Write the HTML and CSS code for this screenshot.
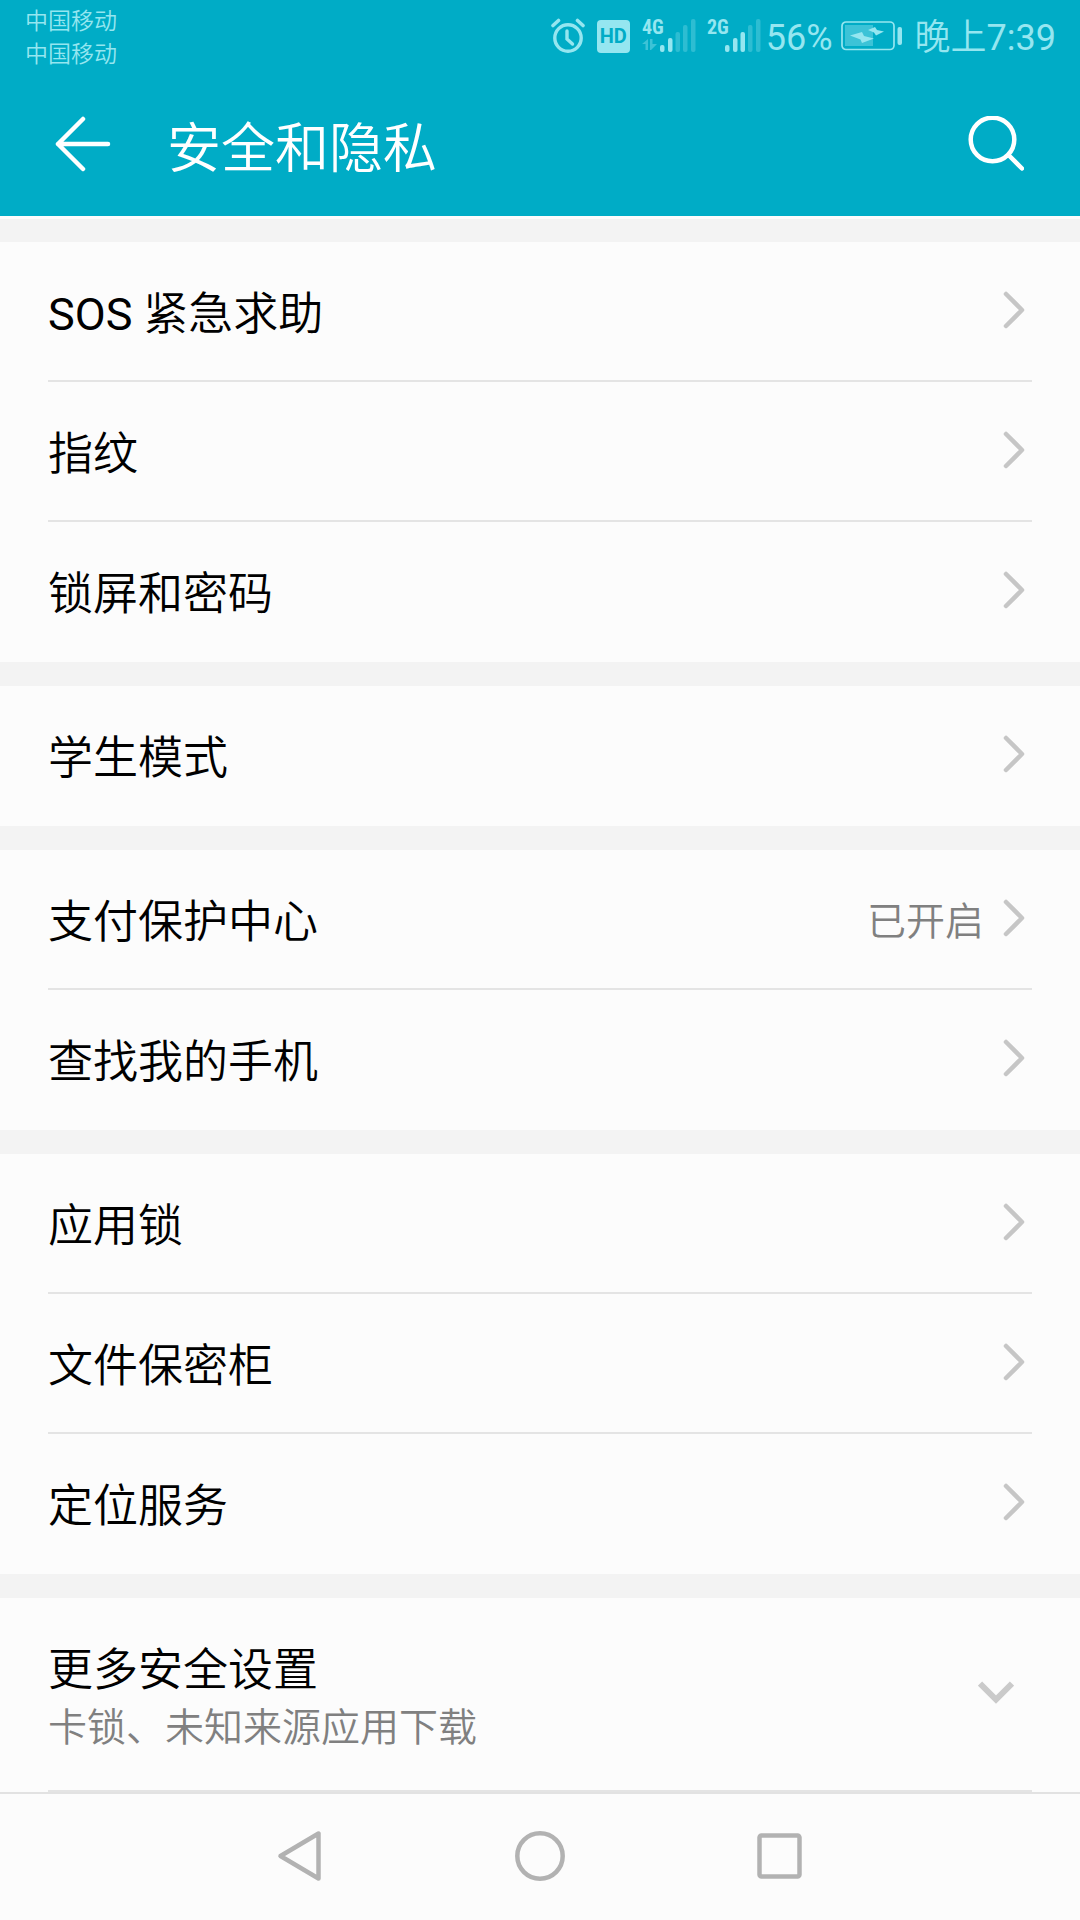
FILE: index.html
```html
<!DOCTYPE html>
<html lang="zh-CN">
<head>
<meta charset="utf-8">
<meta name="viewport" content="width=device-width, initial-scale=1">
<title>安全和隐私</title>
<link rel="stylesheet" href="styles.css">
</head>
<body>
<svg class="defs" aria-hidden="true">
  <symbol id="chevron" viewBox="0 0 24 40"><path d="M4 4 20 20 4 36" fill="none" stroke="currentColor" stroke-width="4.5" stroke-linecap="round" stroke-linejoin="round"/></symbol>
</svg>
<header class="header">
  <div class="status">
    <div class="carriers"><span>中国移动</span><span>中国移动</span></div>
    <div class="indicators">
      <svg class="alarm" width="34" height="36" viewBox="0 0 34 36" fill="none" stroke="currentColor" stroke-linecap="round"><circle cx="17" cy="20" r="13.2" stroke-width="3.4"/><path d="M2 7.500 7.500 2.500M26.500 2.500 32 7.500" stroke-width="3.6"/><path d="M16 13v8l5.500 5" stroke-width="3.400"/></svg>
      <span class="hd">HD</span>
      <svg class="signal" width="54" height="44" viewBox="0 -4 54 44" fill="currentColor"><text class="net" x="0" y="16">4G</text><g opacity=".4"><path d="M0 26 6 21v11H3.500v-6zM8 21h2.500v5H15l-6 6H8z"/></g><rect x="18" y="27" width="4.500" height="7" rx="2"/><rect x="26" y="20" width="4.500" height="14" rx="2"/><g opacity=".3"><rect x="33.500" y="14" width="4.500" height="20" rx="2"/><rect x="41" y="7" width="4.500" height="27" rx="2"/><rect x="49" y="1" width="4.500" height="33" rx="2"/></g></svg>
      <svg class="signal" width="54" height="44" viewBox="0 -4 54 44" fill="currentColor"><text class="net" x="0" y="16">2G</text><rect x="18" y="27" width="4.500" height="7" rx="2"/><rect x="26" y="20" width="4.500" height="14" rx="2"/><rect x="33.500" y="14" width="4.500" height="20" rx="2"/><g opacity=".3"><rect x="41" y="7" width="4.500" height="27" rx="2"/><rect x="49" y="1" width="4.500" height="33" rx="2"/></g></svg>
      <span class="percent">56%</span>
      <svg class="battery" width="62" height="30" viewBox="0 0 62 30"><rect x="1" y="1" width="52" height="27.500" rx="4" fill="none" stroke="currentColor" stroke-width="1.700"/><rect x="4" y="4" width="28" height="21" fill="currentColor" opacity=".4"/><rect x="56.500" y="6" width="4.500" height="18" rx="2" fill="currentColor"/><path d="M9 14.500 21 11 23 15 33 17.500 21 22 19.500 18.500zM27 9 34 6 36 9 43 10.500 35 14.500 33 11.500z" fill="currentColor"/></svg>
      <time class="clock"><span class="daypart">晚上</span>7:39</time>
    </div>
  </div>
  <div class="appbar">
    <button class="icon-button" type="button" aria-label="返回"><svg width="56" height="56" viewBox="0 0 56 56" fill="none" stroke="currentColor" stroke-width="4.500" stroke-linecap="round" stroke-linejoin="round"><path d="M53 28H3M28 3 3 28l25 25"/></svg></button>
    <h1 class="title">安全和隐私</h1>
    <button class="icon-button" type="button" aria-label="搜索"><svg width="56" height="56" viewBox="0 0 56 56" fill="none" stroke="currentColor" stroke-width="4.500" stroke-linecap="round"><circle cx="24.500" cy="23.500" r="21.800"/><path d="M40.500 39 54 52.500"/></svg></button>
  </div>
</header>
<main class="settings">
  <ul class="group">
    <li><a class="row" href="#sos"><span class="label"><span class="latin">SOS</span> 紧急求助</span><svg class="chevron"><use href="#chevron"/></svg></a></li>
    <li><a class="row" href="#fingerprint"><span class="label">指纹</span><svg class="chevron"><use href="#chevron"/></svg></a></li>
    <li><a class="row" href="#lock"><span class="label">锁屏和密码</span><svg class="chevron"><use href="#chevron"/></svg></a></li>
  </ul>
  <ul class="group">
    <li><a class="row" href="#student"><span class="label">学生模式</span><svg class="chevron"><use href="#chevron"/></svg></a></li>
  </ul>
  <ul class="group">
    <li><a class="row" href="#payment"><span class="label">支付保护中心</span><span class="value">已开启</span><svg class="chevron"><use href="#chevron"/></svg></a></li>
    <li><a class="row" href="#find"><span class="label">查找我的手机</span><svg class="chevron"><use href="#chevron"/></svg></a></li>
  </ul>
  <ul class="group">
    <li><a class="row" href="#applock"><span class="label">应用锁</span><svg class="chevron"><use href="#chevron"/></svg></a></li>
    <li><a class="row" href="#safe"><span class="label">文件保密柜</span><svg class="chevron"><use href="#chevron"/></svg></a></li>
    <li><a class="row" href="#location"><span class="label">定位服务</span><svg class="chevron"><use href="#chevron"/></svg></a></li>
  </ul>
  <div class="group">
    <button class="row more" type="button" aria-expanded="false"><span class="more-text"><span class="label">更多安全设置</span><span class="value">卡锁、未知来源应用下载</span></span><svg class="expand" width="36" height="24" viewBox="0 0 36 24" fill="none" stroke="currentColor" stroke-width="6"><path d="M2 2.500 18 18.500 34 2.500"/></svg></button>
  </div>
</main>
<nav class="navbar" aria-label="系统导航">
  <button class="nav-button" type="button" aria-label="后退"><svg width="52" height="52" viewBox="0 0 52 52"><path d="M44.500 3.500v45L6.500 26z"/></svg></button>
  <button class="nav-button" type="button" aria-label="主屏幕"><svg width="52" height="52" viewBox="0 0 52 52"><circle cx="26" cy="26" r="22.700"/></svg></button>
  <button class="nav-button" type="button" aria-label="最近任务"><svg width="52" height="52" viewBox="0 0 52 52"><rect x="5.500" y="5.500" width="40" height="41" rx="2"/></svg></button>
</nav>
</body>
</html>
```
FILE: styles.css
```css
* {
  box-sizing: border-box;
}

body {
  margin: 0;
  min-height: 100vh;
  display: flex;
  flex-direction: column;
  background: #fcfcfc;
  color: #000;
  font-family: Roboto, "Noto Sans CJK SC", sans-serif;
}

button {
  border: 0;
  padding: 0;
  background: none;
  color: inherit;
  font: inherit;
}

svg {
  display: block;
  flex: none;
}

.defs {
  position: absolute;
  width: 0;
  height: 0;
}

.header {
  background: #00acc6;
  color: #fff;
}

.status {
  display: flex;
  justify-content: space-between;
  height: 72px;
  padding: 4px 24px 0 25px;
  color: #95e6f0;
}

.carriers {
  display: flex;
  flex-direction: column;
  padding-top: 1px;
  font-size: 23px;
  line-height: 33px;
  font-weight: 350;
}

.indicators {
  display: flex;
  align-items: center;
  height: 64px;
  font-size: 36px;
}

.hd {
  margin: 0 12px;
  width: 33px;
  border-radius: 4px;
  background: currentColor;
  font-size: 20px;
  line-height: 33px;
  font-weight: 700;
  text-align: center;
}

.hd::first-line {
  color: #00acc6;
}

.signal {
  margin-right: 11px;
}

.signal + .percent {
  margin-left: -6px;
}

.net {
  font: 700 20px "Roboto Condensed", "Liberation Sans Narrow", Roboto, sans-serif;
}

.battery {
  margin: 0 12px 0 8px;
}

.clock,
.percent {
  padding-top: 3px;
  line-height: 48px;
  white-space: nowrap;
}

.daypart {
  font-weight: 350;
}

.appbar {
  display: flex;
  align-items: center;
  height: 144px;
  padding: 0 56px 0 55px;
}

.icon-button {
  flex: none;
}

.title {
  flex: 1;
  margin: 0 0 0 56px;
  padding-top: 12px;
  font-size: 54px;
  line-height: 72px;
  font-weight: 350;
}

.settings {
  display: flex;
  flex-direction: column;
  gap: 24px;
  padding-top: 23px;
  border-top: 3px solid #fcfcfc;
  background: #f3f3f3;
}

.group {
  margin: 0;
  padding: 0 48px;
  list-style: none;
  background: #fcfcfc;
}

.row {
  display: flex;
  align-items: center;
  width: 100%;
  min-height: 140px;
  padding-right: 6px;
  border-bottom: 2px solid #e4e4e4;
  color: inherit;
  text-align: left;
  text-decoration: none;
}

li:last-child .row {
  border-bottom-color: transparent;
}

.label {
  flex: 1;
  padding-top: 8px;
  font-size: 45px;
  line-height: 60px;
  font-weight: 350;
}

.latin {
  font-weight: 400;
}

.value {
  color: #808080;
  font-size: 39px;
  line-height: 54px;
  font-weight: 350;
}

.row > .value {
  padding-top: 6px;
}

.chevron {
  width: 24px;
  height: 40px;
  margin: 0 0 2px 18px;
  color: #c6c6c6;
}

.more {
  min-height: 194px;
  padding-right: 18px;
}

.more-text {
  flex: 1;
  display: flex;
  flex-direction: column;
}

.expand {
  margin-bottom: 2px;
  color: #cacaca;
}

.navbar {
  display: flex;
  justify-content: center;
  margin-top: auto;
  border-top: 2px solid #e2e2e2;
}

.nav-button {
  display: flex;
  align-items: center;
  justify-content: center;
  width: 240px;
  height: 126px;
  padding-bottom: 2px;
  fill: none;
  stroke: #b2b2b2;
  stroke-width: 4.500;
  stroke-linejoin: round;
}
```
